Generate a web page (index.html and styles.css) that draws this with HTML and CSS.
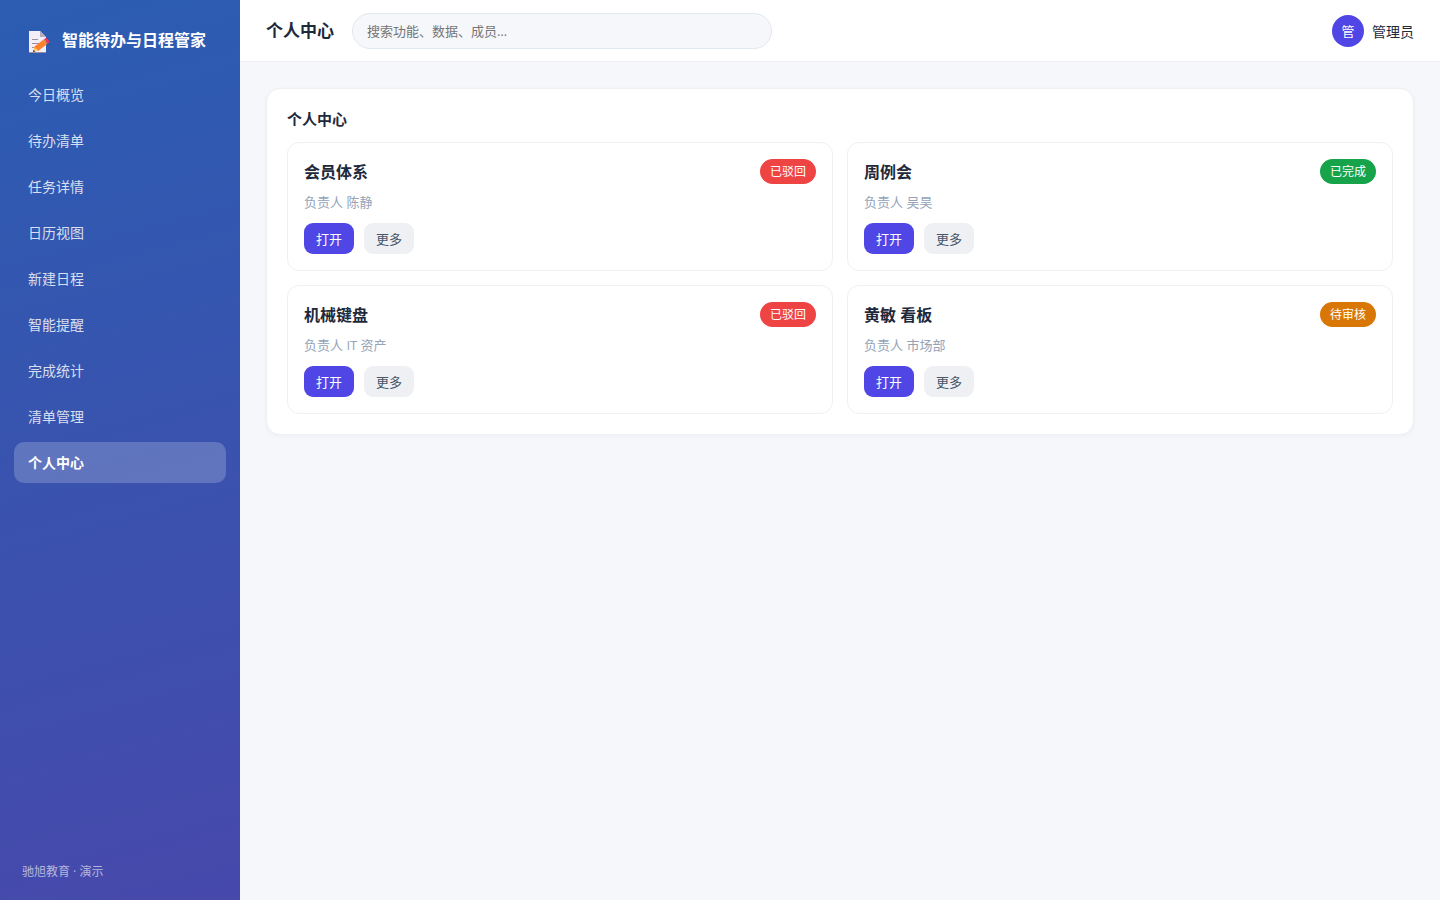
FILE: index.html
```html
<!DOCTYPE html>
<html lang="zh-CN">
<head>
  <meta charset="UTF-8">
  <meta name="viewport" content="width=device-width, initial-scale=1.0">
  <title>智能待办与日程管家</title>
  <link rel="stylesheet" href="styles.css">
</head>
<body>
  <div class="app">
    <aside class="sidebar">
      <div class="brand">
        <svg class="brand-icon" viewBox="0 -4 22 28" aria-hidden="true">
          <path d="M1 1h11l6 6v16H1z" fill="#f3eef8"/>
          <path d="M12 1l6 6h-6z" fill="#b4acbc"/>
          <path d="M1 22h17v1H1z" fill="#998ea2"/>
          <path d="M4 9h6v1H4zM4 13h9v1H4zM4 17h4v1H4z" fill="#998ea2"/>
          <path d="M5 22l1.500-6 4.500 4.500z" fill="#ffce7c"/>
          <path d="M5 22l.6-2.300 1.700 1.700z" fill="#402a32"/>
          <path d="M6.500 16.500L15 10l3.500 4.500-8.500 6.500-1-2-2-.5z" fill="#ff822d"/>
          <path d="M15 10l1.200-.9 3.500 4.500-1.200.9z" fill="#d3883e"/>
          <path d="M16.200 9.100l1.500-1c.5-.3 1-.2 1.300.2l2.300 3c.3.400.2.900-.2 1.200l-1.400 1.100z" fill="#f92f60"/>
        </svg>
        <span>智能待办与日程管家</span>
      </div>
      <nav class="nav">
        <a href="#">今日概览</a>
        <a href="#">待办清单</a>
        <a href="#">任务详情</a>
        <a href="#">日历视图</a>
        <a href="#">新建日程</a>
        <a href="#">智能提醒</a>
        <a href="#">完成统计</a>
        <a href="#">清单管理</a>
        <a href="#" class="active">个人中心</a>
      </nav>
      <div class="sidebar-foot">驰旭教育 · 演示</div>
    </aside>

    <div class="main">
      <header class="topbar">
        <h1>个人中心</h1>
        <input class="search" type="search" placeholder="搜索功能、数据、成员…" aria-label="搜索">
        <div class="user">
          <span class="avatar">管</span>
          <span>管理员</span>
        </div>
      </header>

      <main class="content">
        <section class="panel">
          <h2>个人中心</h2>
          <div class="grid">
            <article class="item">
              <div class="item-head"><h3>会员体系</h3><span class="tag red">已驳回</span></div>
              <p class="meta">负责人 陈静</p>
              <div class="actions"><button type="button" class="btn primary">打开</button><button type="button" class="btn">更多</button></div>
            </article>
            <article class="item">
              <div class="item-head"><h3>周例会</h3><span class="tag green">已完成</span></div>
              <p class="meta">负责人 吴昊</p>
              <div class="actions"><button type="button" class="btn primary">打开</button><button type="button" class="btn">更多</button></div>
            </article>
            <article class="item">
              <div class="item-head"><h3>机械键盘</h3><span class="tag red">已驳回</span></div>
              <p class="meta">负责人 IT 资产</p>
              <div class="actions"><button type="button" class="btn primary">打开</button><button type="button" class="btn">更多</button></div>
            </article>
            <article class="item">
              <div class="item-head"><h3>黄敏 看板</h3><span class="tag orange">待审核</span></div>
              <p class="meta">负责人 市场部</p>
              <div class="actions"><button type="button" class="btn primary">打开</button><button type="button" class="btn">更多</button></div>
            </article>
          </div>
        </section>
      </main>
    </div>
  </div>
</body>
</html>
```
FILE: styles.css
```css
* { box-sizing: border-box; margin: 0; padding: 0; }
body { font-family: "Open Sans", "Noto Sans CJK SC", sans-serif; font-size: 14px; color: #1e293b; background: #f5f7fb; }
.app { display: flex; min-height: 100vh; }

/* sidebar */
.sidebar { width: 240px; flex-shrink: 0; display: flex; flex-direction: column; padding: 22px 14px 18px; color: #fff; background: linear-gradient(165deg, #2b5db2, #4749ab); }
.brand { display: flex; align-items: center; gap: 12px; height: 36px; padding: 0 14px; margin-bottom: 16px; font-size: 16px; font-weight: 700; line-height: 24px; white-space: nowrap; }
.brand-icon { width: 22px; height: 28px; flex-shrink: 0; }
.nav { display: flex; flex-direction: column; gap: 5px; }
.nav a { padding: 10px 14px; line-height: 21px; border-radius: 10px; color: rgba(255, 255, 255, .82); text-decoration: none; }
.nav a.active { background: rgba(255, 255, 255, .2); color: #fff; font-weight: 700; }
.sidebar-foot { margin-top: auto; padding: 0 8px; font-size: 12px; line-height: 20px; color: rgba(255, 255, 255, .6); }

/* top bar */
.main { flex: 1; min-width: 0; }
.topbar { display: flex; align-items: center; gap: 18px; height: 62px; padding: 0 26px; background: #fff; border-bottom: 1px solid #edeff3; }
.topbar h1 { font-size: 17px; line-height: 24px; white-space: nowrap; }
.search { width: 420px; height: 36px; padding: 0 14px; border: 1px solid #e2e8f0; border-radius: 18px; background: #f5f7fb; font: inherit; font-size: 13px; outline: none; appearance: none; }
.search::placeholder { color: #757575; }
.user { display: flex; align-items: center; gap: 8px; margin-left: auto; }
.avatar { width: 32px; height: 32px; border-radius: 50%; background: #4f46e5; color: #fff; font-size: 13px; line-height: 32px; text-align: center; }

/* content */
.content { padding: 26px; }
.panel { padding: 20px; background: #fff; border: 1px solid #eef0f4; border-radius: 14px; box-shadow: 0 1px 4px rgba(15, 23, 42, .04); }
.panel h2 { margin-bottom: 13px; font-size: 15px; line-height: 20px; }
.grid { display: grid; grid-template-columns: 1fr 1fr; gap: 14px; }
.item { padding: 16px; border: 1px solid #eef0f4; border-radius: 12px; }
.item-head { display: flex; align-items: center; justify-content: space-between; }
.item h3 { font-size: 16px; line-height: 24px; }
.tag { padding: 0 10px; border-radius: 13px; color: #fff; font-size: 12px; line-height: 25px; }
.red { background: #ef4444; }
.green { background: #16a34a; }
.orange { background: #d97706; }
.meta { margin: 8px 0 11px; font-size: 13px; line-height: 20px; color: #94a3b8; }
.actions { display: flex; gap: 10px; }
.btn { height: 31px; padding: 0 12px; border: none; border-radius: 9px; background: #eef0f4; color: #475569; font: inherit; font-size: 13px; cursor: pointer; }
.btn.primary { background: #4f46e5; color: #fff; }
```
